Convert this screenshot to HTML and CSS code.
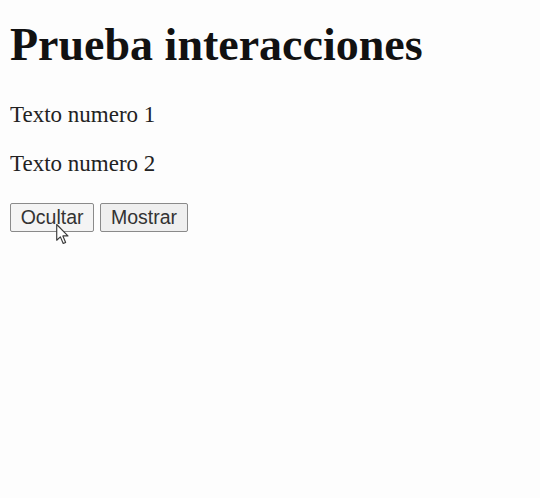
FILE: index.html
```html
<!DOCTYPE html>
<html lang="es">
<head>
<meta charset="utf-8">
<title>Prueba interacciones</title>
<link rel="stylesheet" href="styles.css">
</head>
<body>
<h1 class="title">Prueba interacciones</h1>
<p class="text">Texto numero 1</p>
<p class="text">Texto numero 2</p>
<div class="actions">
  <button class="btn btn-light" type="button">Ocultar</button>
  <button class="btn" type="button">Mostrar</button>
  <svg class="cursor" width="14" height="22" viewBox="0 0 13 21" aria-hidden="true">
    <path d="M0.5 0.5 L0.5 15.5 L4 12.3 L6.7 18.6 L9 17.6 L6.4 11.4 L11.2 11.4 Z" fill="#ffffff" stroke="#3a3a3a" stroke-width="1.1" stroke-linejoin="round"/>
  </svg>
</div>
</body>
</html>
```

FILE: styles.css
```css
html {
  background: #fdfdfd;
}

body {
  margin: 0 10px 10px;
  font-family: "Liberation Serif", "Times New Roman", serif;
  font-size: 23px;
  color: #222;
}

.title {
  font-size: 46px;
  font-weight: bold;
  margin: 18px 0 30.8px;
  color: #111;
}

.text {
  margin: 23px 0;
}

.actions {
  position: relative;
  margin-top: 26px;
  padding-bottom: 24px;
  display: flex;
  align-items: flex-start;
  gap: 6px;
}

.btn {
  font-family: "Liberation Sans", Arial, sans-serif;
  font-size: 19.5px;
  color: #333;
  background: #efefef;
  border: 1px solid #8a8a8a;
  border-radius: 2px;
  padding: 2.3px 9.7px;
  margin: 0;
  line-height: normal;
}

.btn-light {
  background: #f4f4f4;
}

.cursor {
  position: absolute;
  left: 46px;
  top: 21px;
  width: 14px;
  height: 22px;
  display: block;
  z-index: 2;
}
```
